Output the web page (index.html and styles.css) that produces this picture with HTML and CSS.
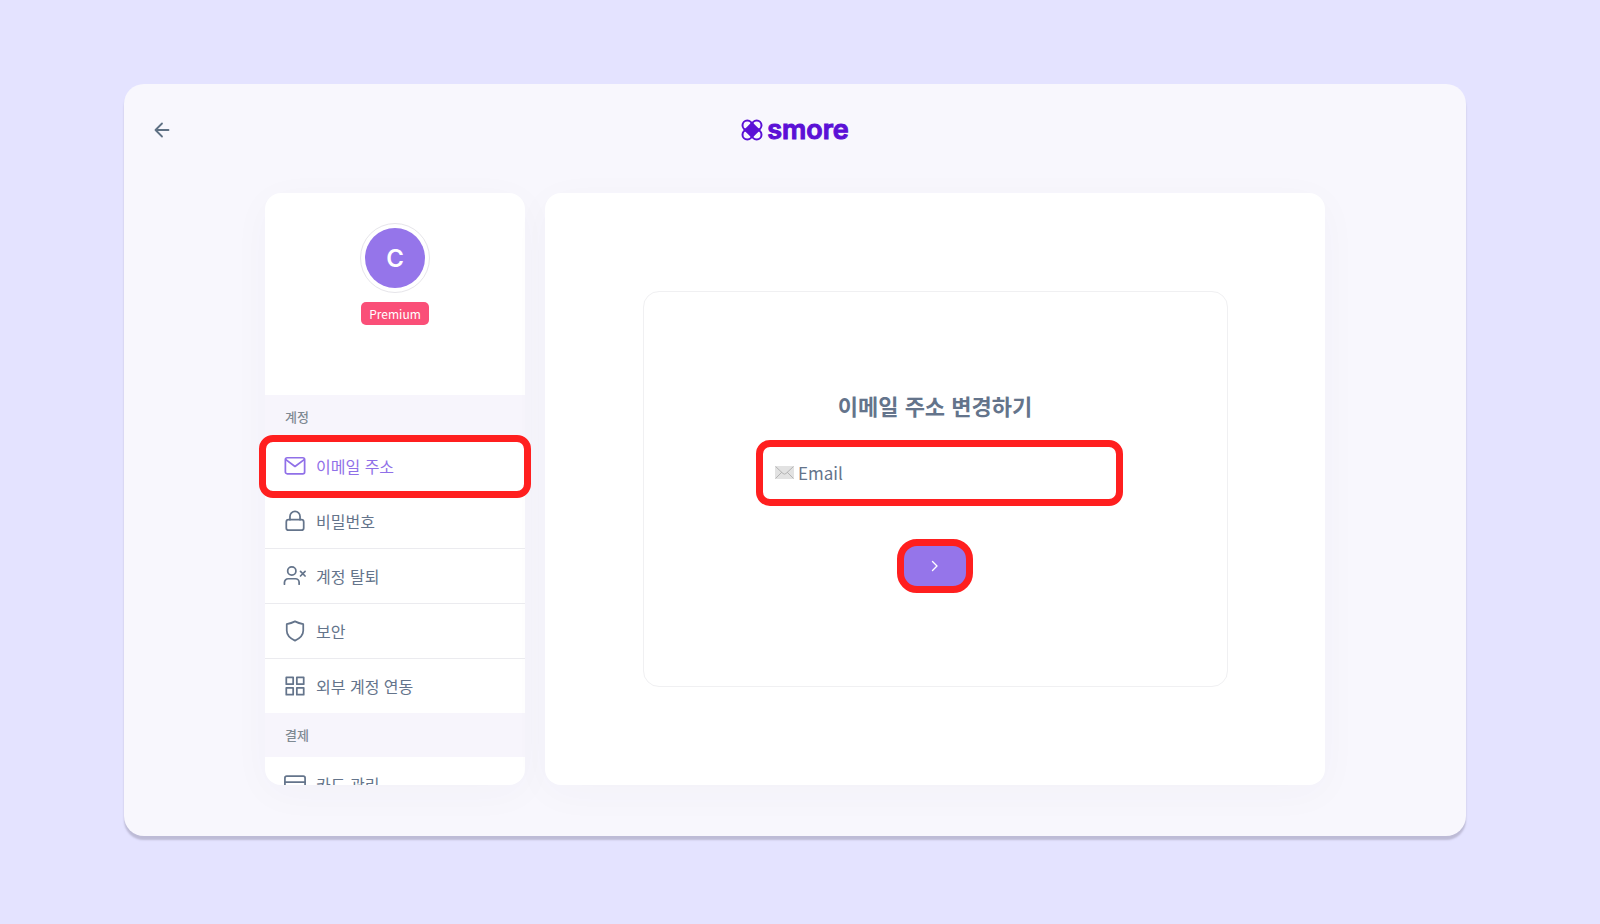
FILE: index.html
```html
<!DOCTYPE html>
<html lang="ko">
<head>
<meta charset="utf-8">
<title>smore</title>
<link rel="stylesheet" href="styles.css">
</head>
<body>
<div class="window">
  <header class="topbar">
    <button class="back" type="button" aria-label="뒤로">
      <svg class="icon-back" viewBox="0 0 16 16"><path d="M14.500 8H1.500M8 1.500L1.500 8L8 14.500"/></svg>
    </button>
    <a class="logo" href="#">
      <svg class="logo-mark" viewBox="0 0 22 22">
        <g class="petals"><circle cx="6.300" cy="6.300" r="4.800"/><circle cx="15.700" cy="6.300" r="4.800"/><circle cx="6.300" cy="15.700" r="4.800"/><circle cx="15.700" cy="15.700" r="4.800"/></g>
        <path class="core" d="M11 2.500Q13.500 6.500 19.500 11Q15.500 13.500 11 19.500Q8.500 15.500 2.500 11Q6.500 8.500 11 2.500Z"/>
        <path class="core" d="M11 3L19 11L11 19L3 11Z"/>
      </svg>
      <span class="logo-text">smore</span>
    </a>
  </header>
  <div class="content">
    <nav class="sidebar">
      <div class="profile">
        <div class="avatar"><span class="avatar-letter">C</span></div>
        <span class="plan">Premium</span>
      </div>
      <section class="group">
        <h2 class="group-title">계정</h2>
        <a class="item item-active marked" href="#"><svg class="icon" viewBox="0 0 24 24"><rect x="1.500" y="3" width="21" height="17.500" rx="2"/><path d="M2 5L12 12.500L22 5"/></svg>이메일 주소</a>
        <a class="item" href="#"><svg class="icon" viewBox="0 0 24 24"><rect x="2.500" y="10.500" width="19" height="11.500" rx="2.500"/><path d="M6.500 10.500V7a5.500 5.500 0 0 1 11 0V10.500"/></svg>비밀번호</a>
        <a class="item" href="#"><svg class="icon icon-wide" viewBox="0 0 24 24"><circle cx="8.500" cy="6.500" r="4.500"/><path d="M.500 21v-2a4 4 0 0 1 4-4h8a4 4 0 0 1 4 4v2M18 7l5 5M23 7l-5 5"/></svg>계정 탈퇴</a>
        <a class="item" href="#"><svg class="icon" viewBox="0 0 24 24"><path d="M12 1.500Q16 3.500 21 4.500V11.500C21 17 16.500 20.500 12 22.500C7.500 20.500 3 17 3 11.500V4.500Q8 3.500 12 1.500Z"/></svg>보안</a>
        <a class="item" href="#"><svg class="icon" viewBox="0 0 24 24"><path d="M2.500 2.500h7.500v7.500H2.500zM14 2.500h7.500v7.500h-7.500zM2.500 14h7.500v7.500H2.500zM14 14h7.500v7.500h-7.500z"/></svg>외부 계정 연동</a>
      </section>
      <section class="group group-last">
        <h2 class="group-title">결제</h2>
        <a class="item" href="#"><svg class="icon icon-wide" viewBox="0 0 24 24"><rect x="1" y="3.500" width="22" height="17.500" rx="2"/><path d="M1 10h22"/></svg>카드 관리</a>
      </section>
    </nav>
    <main class="panel">
      <form class="card">
        <h1 class="card-title">이메일 주소 변경하기</h1>
        <div class="field">
          <svg class="envelope" viewBox="0 0 19 13"><rect class="env-body" width="19" height="13" rx="1"/><path class="env-line" d="M.5 12.500L7 6M18.500 12.500L12 6M.5.5L8 7.500Q9.500 8.800 11 7.500L18.500.5"/></svg>
          <input class="email" type="email" placeholder="Email" aria-label="Email">
        </div>
        <button class="submit" type="button" aria-label="다음">
          <svg class="icon-next" viewBox="0 0 8 12"><path d="M1.500 1.500L6 6L1.500 10.500"/></svg>
        </button>
      </form>
    </main>
  </div>
</div>
</body>
</html>
```
FILE: styles.css
```css
* { box-sizing: border-box; }
body {
  margin: 0;
  min-height: 100vh;
  padding: 84px 134px 88px 124px;
  display: flex;
  background: #e4e3ff;
  color: #64748b;
  font-family: "Noto Sans CJK KR", sans-serif;
  font-size: 16px;
}
.window {
  flex: 1;
  display: flex;
  flex-direction: column;
  padding: 30px 20px 51px;
  border-radius: 20px;
  background: #f8f7fd;
  box-shadow: 0 4px 2px #bdbbd6;
}
.topbar {
  display: grid;
  grid-template-columns: 36px 1fr 36px;
  align-items: center;
  height: 32px;
}
.back {
  display: flex;
  align-items: center;
  justify-content: center;
  height: 32px;
  padding: 0;
  border: 0;
  background: none;
}
.icon-back { width: 16px; height: 16px; fill: none; stroke: #5f7184; stroke-width: 1.8; stroke-linecap: round; stroke-linejoin: round; }
.logo {
  display: flex;
  align-items: center;
  justify-content: center;
  gap: 4px;
  color: #5b10d6;
  text-decoration: none;
}
.logo-mark { width: 22px; height: 22px; }
.petals { fill: none; stroke: #5b10d6; stroke-width: 2; }
.core { fill: #5b10d6; }
.logo-text {
  font: 600 27px/32px Inter, sans-serif;
  -webkit-text-stroke: 1px #5b10d6;
}
.content {
  flex: 1;
  min-height: 0;
  display: grid;
  grid-template-columns: 1fr 3fr;
  gap: 20px;
  padding: 47px 121px 0;
}
.sidebar, .panel {
  border-radius: 16px;
  background: #fff;
  box-shadow: 0 8px 40px rgba(60, 50, 100, 0.03);
}
.sidebar {
  display: flex;
  flex-direction: column;
  height: 592px;
}
.profile {
  flex: none;
  display: flex;
  flex-direction: column;
  align-items: center;
  gap: 9px;
  height: 202px;
  padding-top: 30px;
}
.avatar {
  width: 70px;
  height: 70px;
  padding: 4px;
  border: 1px solid #e6e5ea;
  border-radius: 50%;
}
.avatar-letter {
  display: flex;
  align-items: center;
  justify-content: center;
  height: 60px;
  padding-top: 2px;
  border-radius: 50%;
  background: #9575ea;
  color: #fff;
  font: 600 24px/30px Inter, sans-serif;
}
.plan {
  padding: 0 8px;
  border-radius: 5px;
  background: #fa4f78;
  color: #fff;
  font-size: 12px;
  line-height: 23px;
}
.group { flex: none; }
.group-last {
  flex: 1;
  min-height: 0;
  overflow: hidden;
  border-radius: 0 0 16px 16px;
}
.group-title {
  margin: 0;
  padding: 0 20px;
  background: #f7f5fc;
  color: #7f8a93;
  font-size: 13px;
  font-weight: 500;
  line-height: 44px;
}
.item {
  position: relative;
  display: flex;
  align-items: center;
  gap: 10px;
  height: 55px;
  padding: 0 19px;
  border-bottom: 1px solid #ebebef;
  color: #64748b;
  text-decoration: none;
}
.item:last-child { height: 54px; border-bottom: 0; }
.item-active { color: #9070e8; }
.icon { width: 22px; height: 22px; fill: none; stroke: currentColor; stroke-width: 1.9; stroke-linecap: round; stroke-linejoin: round; }
.icon-wide { overflow: visible; }
.marked::after, .field::after, .submit::after {
  content: "";
  position: absolute;
  border: 7px solid #ff1f1f;
  border-radius: 14px;
  pointer-events: none;
}
.marked::after { inset: -4px -6px -5px -6px; z-index: 1; }
.panel {
  display: flex;
  align-items: center;
  justify-content: center;
}
.card {
  display: flex;
  flex-direction: column;
  align-items: center;
  width: 75%;
  height: 396px;
  padding-top: 97px;
  border: 1px solid #f0f0f2;
  border-radius: 16px;
}
.card-title {
  margin: 0 0 28px;
  font-size: 22px;
  font-weight: 700;
  line-height: 32px;
}
.field {
  position: relative;
  display: flex;
  align-items: center;
  gap: 4px;
  width: 344px;
  height: 50px;
  padding: 0 0 3px 12px;
}
.field::after { inset: -9px -16px -7px -7px; }
.envelope { width: 19px; height: 13px; }
.env-body { fill: #e2e2e2; }
.env-line { fill: none; stroke: #b4b4b4; stroke-width: 1; }
.email {
  flex: 1;
  min-width: 0;
  height: 40px;
  padding: 0;
  border: 0;
  outline: 0;
  background: none;
  color: #64748b;
  font: 400 17px/28px "Noto Sans CJK KR", sans-serif;
}
.email::placeholder { color: #64748b; opacity: 1; }
.submit {
  position: relative;
  display: flex;
  align-items: center;
  justify-content: center;
  width: 64px;
  height: 42px;
  margin-top: 46px;
  padding: 0;
  border: 0;
  border-radius: 14px;
  background: #9575ea;
}
.submit::after { inset: -6px; border-radius: 20px; }
.icon-next { width: 8px; height: 12px; fill: none; stroke: #fff; stroke-width: 1.4; stroke-linecap: round; stroke-linejoin: round; }
```
